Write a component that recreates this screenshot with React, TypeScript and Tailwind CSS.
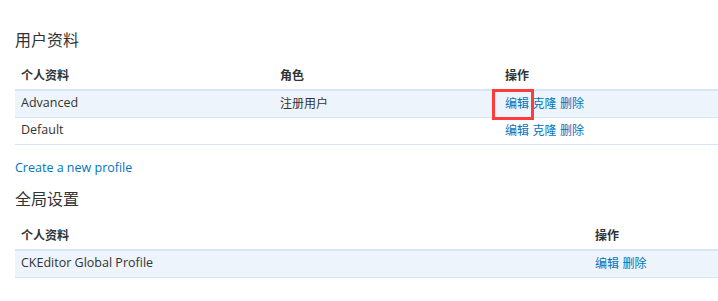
const font = { fontFamily: '"Open Sans", "Noto Sans CJK SC", sans-serif' };

type Row = { name: string; role?: string; actions: string[] };

const profiles: Row[] = [
  { name: "Advanced", role: "注册用户", actions: ["编辑", "克隆", "删除"] },
  { name: "Default", actions: ["编辑", "克隆", "删除"] },
];

function ActionLinks({ actions }: { actions: string[] }) {
  return (
    <span className="flex gap-[3.5px] text-[#0074bd]">
      {actions.map((a) => (
        <a key={a} href="#" className="hover:underline">
          {a}
        </a>
      ))}
    </span>
  );
}

export default function App() {
  return (
    <div className="relative w-[718px] h-[301px] bg-white text-[#333] text-[12px] pl-[15px]" style={font}>
      <h2 className="text-[16px] leading-[24px] pt-[28px] text-[#333]">用户资料</h2>

      <table className="mt-[10px] w-[703px] border-collapse table-fixed">
        <thead>
          <tr className="h-[28px] border-b-2 border-[#d6e6f4]">
            <th className="w-[259px] text-left font-semibold px-[6px] pt-[1px]">个人资料</th>
            <th className="w-[225px] text-left font-semibold px-[6px] pt-[1px]">角色</th>
            <th className="text-left font-semibold px-[6px] pt-[1px]">操作</th>
          </tr>
        </thead>
        <tbody>
          {profiles.map((p, i) => (
            <tr key={p.name} className={`h-[27px] border-b border-[#d6e6f4] ${i === 0 ? "bg-[#edf4fb]" : ""}`}>
              <td className="px-[6px] text-[12.5px]">{p.name}</td>
              <td className="px-[6px]">{p.role}</td>
              <td className="px-[6px]">
                <ActionLinks actions={p.actions} />
              </td>
            </tr>
          ))}
        </tbody>
      </table>

      <a href="#" className="block mt-[14px] text-[#0074bd] text-[12.5px] leading-[18px]">
        Create a new profile
      </a>

      <h2 className="text-[16px] leading-[24px] mt-[10px] text-[#333]">全局设置</h2>

      <table className="mt-[12px] w-[703px] border-collapse table-fixed">
        <thead>
          <tr className="h-[27px] border-b-2 border-[#d6e6f4]">
            <th className="text-left font-semibold px-[6px] pt-[1px]">个人资料</th>
            <th className="w-[129px] text-left font-semibold px-[6px] pt-[1px]">操作</th>
          </tr>
        </thead>
        <tbody>
          <tr className="h-[28px] border-b border-[#d6e6f4] bg-[#edf4fb]">
            <td className="px-[6px] text-[12.5px]">CKEditor Global Profile</td>
            <td className="px-[6px]">
              <ActionLinks actions={["编辑", "删除"]} />
            </td>
          </tr>
        </tbody>
      </table>

      <div className="absolute left-[492px] top-[89px] w-[42px] h-[31px] border-[3px] border-[#ff3b3b]" />
    </div>
  );
}
